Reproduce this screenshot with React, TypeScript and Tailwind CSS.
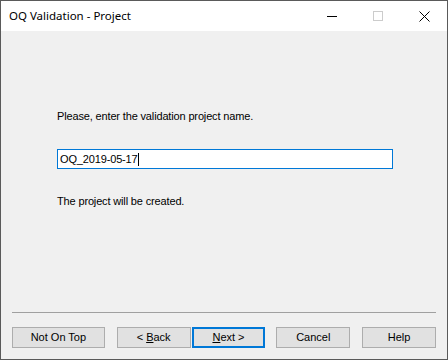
import React from "react";

const Btn = ({ children, def = false, w }: { children: React.ReactNode; def?: boolean; w: string }) => (
  <div
    className={`${w} h-[21px] flex items-center justify-center bg-[#e1e1e1] text-[11px] text-black ${
      def ? "border-2 border-[#0078d7]" : "border border-[#adadad]"
    }`}
  >
    {children}
  </div>
);

export default function App() {
  return (
    <div
      className="w-[448px] h-[360px] border border-[#5a5a5a] bg-[#f0f0f0] flex flex-col overflow-hidden"
      style={{ fontFamily: '"Liberation Sans", Arial, sans-serif' }}
    >
      <div className="h-[30px] bg-white flex items-center shrink-0">
        <div className="pl-[8px] text-[11.5px] text-black flex-1" style={{ fontFamily: '"Noto Sans", sans-serif' }}>
          OQ Validation - Project
        </div>
        <div className="w-[46px] h-full flex items-center justify-center">
          <div className="w-[10px] h-px bg-black" />
        </div>
        <div className="w-[46px] h-full flex items-center justify-center">
          <div className="w-[10px] h-[10px] border border-[#cccccc]" />
        </div>
        <div className="w-[46px] h-full flex items-center justify-center">
          <svg width="11" height="11" viewBox="0 0 11 11">
            <path d="M0.5 0.5 L10.5 10.5 M10.5 0.5 L0.5 10.5" stroke="#000" strokeWidth="1" />
          </svg>
        </div>
      </div>
      <div className="flex-1 flex flex-col px-[11px] tracking-[-0.15px]">
        <div className="pl-[45px] pt-[79px] text-[11px] text-black leading-[13px]">
          Please, enter the validation project name.
        </div>
        <div className="ml-[45px] mt-[26px] w-[336px] h-[20px] bg-white border border-[#0078d7] flex items-center pl-[2px] text-[11px] text-black">
          OQ_2019-05-17<span className="w-px h-[13px] bg-black" />
        </div>
        <div className="pl-[45px] mt-[26px] text-[11px] text-black leading-[13px]">The project will be created.</div>
        <div className="flex-1" />
        <div className="h-px bg-[#a0a0a0]" />
        <div className="flex mt-[14px] mb-[11px] tracking-normal">
          <Btn w="w-[93px]">Not On Top</Btn>
          <div className="w-[12px]" />
          <Btn w="w-[74px]">
            &lt; <span className="underline ml-[3px]">B</span>ack
          </Btn>
          <div className="w-[1px]" />
          <Btn w="w-[74px]" def>
            <span className="underline">N</span>ext &gt;
          </Btn>
          <div className="w-[11px]" />
          <Btn w="w-[74px]">Cancel</Btn>
          <div className="w-[12px]" />
          <Btn w="w-[74px]">Help</Btn>
        </div>
      </div>
    </div>
  );
}
